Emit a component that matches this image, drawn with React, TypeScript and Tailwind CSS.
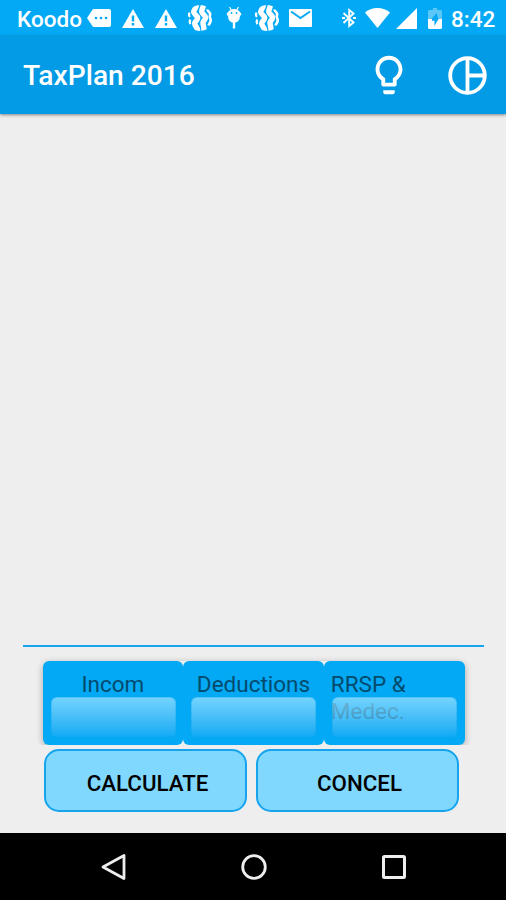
import type { ReactNode } from "react";

interface IconProps {
  className?: string;
}

function MoreIcon({ className }: IconProps) {
  return (
    <svg viewBox="0 0 24 18" className={className} fill="#fff">
      <path d="M7 0h15a2 2 0 0 1 2 2v14a2 2 0 0 1-2 2H7c-.8 0-1.300-.4-1.700-1L0 9l5.300-8C5.700.4 6.200 0 7 0z" />
      <g fill="#03a9f4">
        <circle cx="9" cy="9" r="1.300" />
        <circle cx="14" cy="9" r="1.300" />
        <circle cx="19" cy="9" r="1.300" />
      </g>
    </svg>
  );
}

function WarningIcon({ className }: IconProps) {
  return (
    <svg viewBox="1 2 22 19" className={className}>
      <path d="M1 21h22L12 2z" fill="#fff" />
      <path d="M12 8.500v6M12 16v2.500" stroke="#03a9f4" strokeWidth="2.400" />
    </svg>
  );
}

function WavesIcon({ className }: IconProps) {
  return (
    <svg viewBox="0 0 26 26" className={`rounded-full ${className}`} fill="none" stroke="#fff" strokeLinejoin="round">
      <path d="M9.500 0C9 4 6.700 4.500 6.700 7s4 3.500 4 6-3 3-3 5.500 3 3.500 3 7.500" strokeWidth="5.400" />
      <path d="M16.500 0c-.3 3-1.800 4-1.800 6.500s3.800 3.500 3.800 6-2.500 3-2.500 5.500 1.500 4 .8 8" strokeWidth="5.400" />
      <path d="M2.600 7.500C1.500 9.500 1.500 10.500 3 12M3.300 14.500c-1 2-.6 3.500.2 4.500" strokeWidth="2.200" />
      <path d="M20.500 4.500c-.3 1.500 2.700 3 2.700 4.500s-.8 2-.3 3.500 1.300 2 .6 4-1.600 2.500-2 4" strokeWidth="2.600" />
    </svg>
  );
}

function DebugIcon({ className }: IconProps) {
  return (
    <svg viewBox="0 0 16 22" className={className} fill="#fff">
      <path d="M3.500 0l1.800 3M12.500 0l-1.800 3" stroke="#fff" strokeWidth="1.200" />
      <path d="M.5 7l2-2.500C4 2.800 5.500 2 8 2s4 .8 5.500 2.500L15.500 7l-1.700 2.500c0 4-2.300 6-5.800 6s-5.800-2-5.800-6z" />
      <path d="M6.800 14h2.400v7.500H6.800z" />
      <g fill="#03a9f4">
        <circle cx="5.500" cy="6" r=".9" />
        <circle cx="10.500" cy="6" r=".9" />
      </g>
    </svg>
  );
}

function MailIcon({ className }: IconProps) {
  return (
    <svg viewBox="0 0 23 18" className={className}>
      <rect width="23" height="18" rx="1" fill="#fff" />
      <path d="M2 2.500l9.500 6.500L21 2.500" fill="none" stroke="#03a9f4" strokeWidth="1.900" />
    </svg>
  );
}

function BluetoothIcon({ className }: IconProps) {
  return (
    <svg viewBox="0 0 14 20" className={className} fill="none" stroke="#fff" strokeWidth="1.900">
      <path d="M1.500 5l10 9.500L7.200 18V2l4.300 3.500L1.500 15" />
      <path d="M0 10h3M11 10h3" strokeWidth="2.200" />
    </svg>
  );
}

function BatteryIcon({ className }: IconProps) {
  return (
    <svg viewBox="0 0 14 21" className={className}>
      <path
        d="M5 0h4v2h3.500A1.500 1.500 0 0 1 14 3.500V11h-3.500L8.500 5 3.500 11H0V3.500A1.500 1.500 0 0 1 1.500 2H5z"
        fill="#fff"
        fillOpacity=".35"
      />
      <path d="M0 11h4v1.800h2.500V18l4-7H14v8.500a1.500 1.500 0 0 1-1.500 1.500h-11A1.500 1.500 0 0 1 0 19.500z" fill="#fff" />
    </svg>
  );
}

function StatusBar() {
  return (
    <div className="flex h-9 shrink-0 items-center bg-[#03a9f4] text-[22.5px] font-medium leading-none text-white">
      <span className="ml-[17px] w-[70px] pt-[2px]">Koodo</span>
      <MoreIcon className="h-[18px] w-6" />
      <WarningIcon className="ml-[11px] h-[19px] w-[22px]" />
      <WarningIcon className="ml-[11px] h-[19px] w-[22px]" />
      <WavesIcon className="ml-[10px] h-[26px] w-[26px]" />
      <DebugIcon className="ml-[13px] h-[22px] w-4" />
      <WavesIcon className="ml-3 h-[26px] w-[26px]" />
      <MailIcon className="ml-[9px] h-[18px] w-[23px]" />
      <BluetoothIcon className="ml-[30px] h-5 w-[14px]" />
      <svg viewBox="0 0 25 20" className="ml-[9px] h-5 w-[25px]" fill="#fff">
        <path d="M12.500 20L0 4.500C3.500 1.600 7.500 0 12.500 0S21.500 1.600 25 4.500z" />
      </svg>
      <svg viewBox="0 0 21 21" className="ml-[6px] h-[21px] w-[21px]" fill="#fff">
        <path d="M21 0v21H0z" />
      </svg>
      <BatteryIcon className="ml-[11px] h-[21px] w-[14px]" />
      <span className="ml-[9px] pt-[2px]">8:42</span>
    </div>
  );
}

function AppBar() {
  return (
    <header className="z-10 flex h-[78px] shrink-0 items-center bg-[#039be5] pl-[23px] pr-[19px] text-white shadow-[0_1px_3px_rgba(0,0,0,0.45)]">
      <h1 className="flex-1 pt-[3px] text-[28.2px] font-medium leading-none">TaxPlan 2016</h1>
      <svg viewBox="0 0 24 24" className="h-[46px] w-[46px]" fill="#fff">
        <path d="M9 21c0 .5.4 1 1 1h4c.6 0 1-.5 1-1v-1H9v1zm3-19C8.100 2 5 5.100 5 9c0 2.400 1.200 4.500 3 5.700V17c0 .5.4 1 1 1h6c.6 0 1-.5 1-1v-2.300c1.800-1.300 3-3.400 3-5.700 0-3.900-3.100-7-7-7zm2.900 11.100l-.9.6V16h-4v-2.300l-.8-.6C7.800 12.200 7 10.600 7 9c0-2.800 2.200-5 5-5s5 2.200 5 5c0 1.600-.8 3.200-2.100 4.100z" />
      </svg>
      <svg viewBox="0 0 39 39" className="ml-9 h-[39px] w-[39px]" fill="none" stroke="#fff" strokeWidth="3.800">
        <circle cx="19.500" cy="19.500" r="17.300" />
        <path d="M19.500 2v35M19.500 19.500H37" />
      </svg>
    </header>
  );
}

interface TabCardProps {
  children: ReactNode;
  align?: string;
}

function TabCard({ children, align = "text-center" }: TabCardProps) {
  return (
    <div className="relative h-[84px] flex-1 rounded-[6px] bg-[#03a9f4] px-[7px] pt-[10px]">
      <div className={`h-[54px] text-[22.5px] leading-[27px] text-[#024b6d] ${align}`}>{children}</div>
      <div className="absolute left-2 top-9 h-[41px] w-[125px] rounded-[6px] border border-[#0b9fe8]/30 bg-linear-to-b from-[#9be2ff]/75 to-[#03a9f4]/50 bg-origin-border" />
    </div>
  );
}

function ActionButton({ children }: { children: ReactNode }) {
  return (
    <button className="h-[63px] w-[203px] rounded-[15px] border-2 border-[#16a4ee] bg-[#81d8ff] pl-[4px] pt-[6px] text-[22.3px] font-medium text-black">
      {children}
    </button>
  );
}

function NavBar() {
  return (
    <nav className="flex h-[67px] shrink-0 items-center justify-center gap-[114px] bg-black">
      <svg viewBox="0 0 27 28" className="h-7 w-[27px]" fill="none" stroke="#eee" strokeWidth="2.800">
        <path d="M24 2.500v23L3 14z" strokeLinejoin="round" />
      </svg>
      <svg viewBox="0 0 26 26" className="h-[26px] w-[26px]" fill="none" stroke="#eee" strokeWidth="2.800">
        <circle cx="13" cy="13" r="11.300" />
      </svg>
      <svg viewBox="0 0 26 26" className="h-[26px] w-[26px]" fill="none" stroke="#eee" strokeWidth="3">
        <rect x="2.500" y="2.500" width="21" height="21" rx="1" />
      </svg>
    </nav>
  );
}

export default function App() {
  return (
    <div className="flex h-[900px] w-[506px] flex-col overflow-hidden bg-[#eeeeee] font-[Roboto,sans-serif]">
      <StatusBar />
      <AppBar />
      <main className="flex flex-1 flex-col justify-end pb-[21px]">
        <div className="ml-[23px] mr-[22px] h-[2px] bg-[#16a4ee]" />
        <div className="ml-[42.5px] mr-[41.5px] mt-[14px] flex rounded-[6px] shadow-[0_2px_7px_rgba(0,0,0,0.3)]">
          <TabCard>Incom</TabCard>
          <TabCard>Deductions</TabCard>
          <TabCard align="text-left">
            RRSP &amp;
            <br />
            Medec.
          </TabCard>
        </div>
        <div className="relative flex gap-[9px] bg-[#eeeeee] pl-11 pt-[4px]">
          <ActionButton>CALCULATE</ActionButton>
          <ActionButton>CONCEL</ActionButton>
        </div>
      </main>
      <NavBar />
    </div>
  );
}
